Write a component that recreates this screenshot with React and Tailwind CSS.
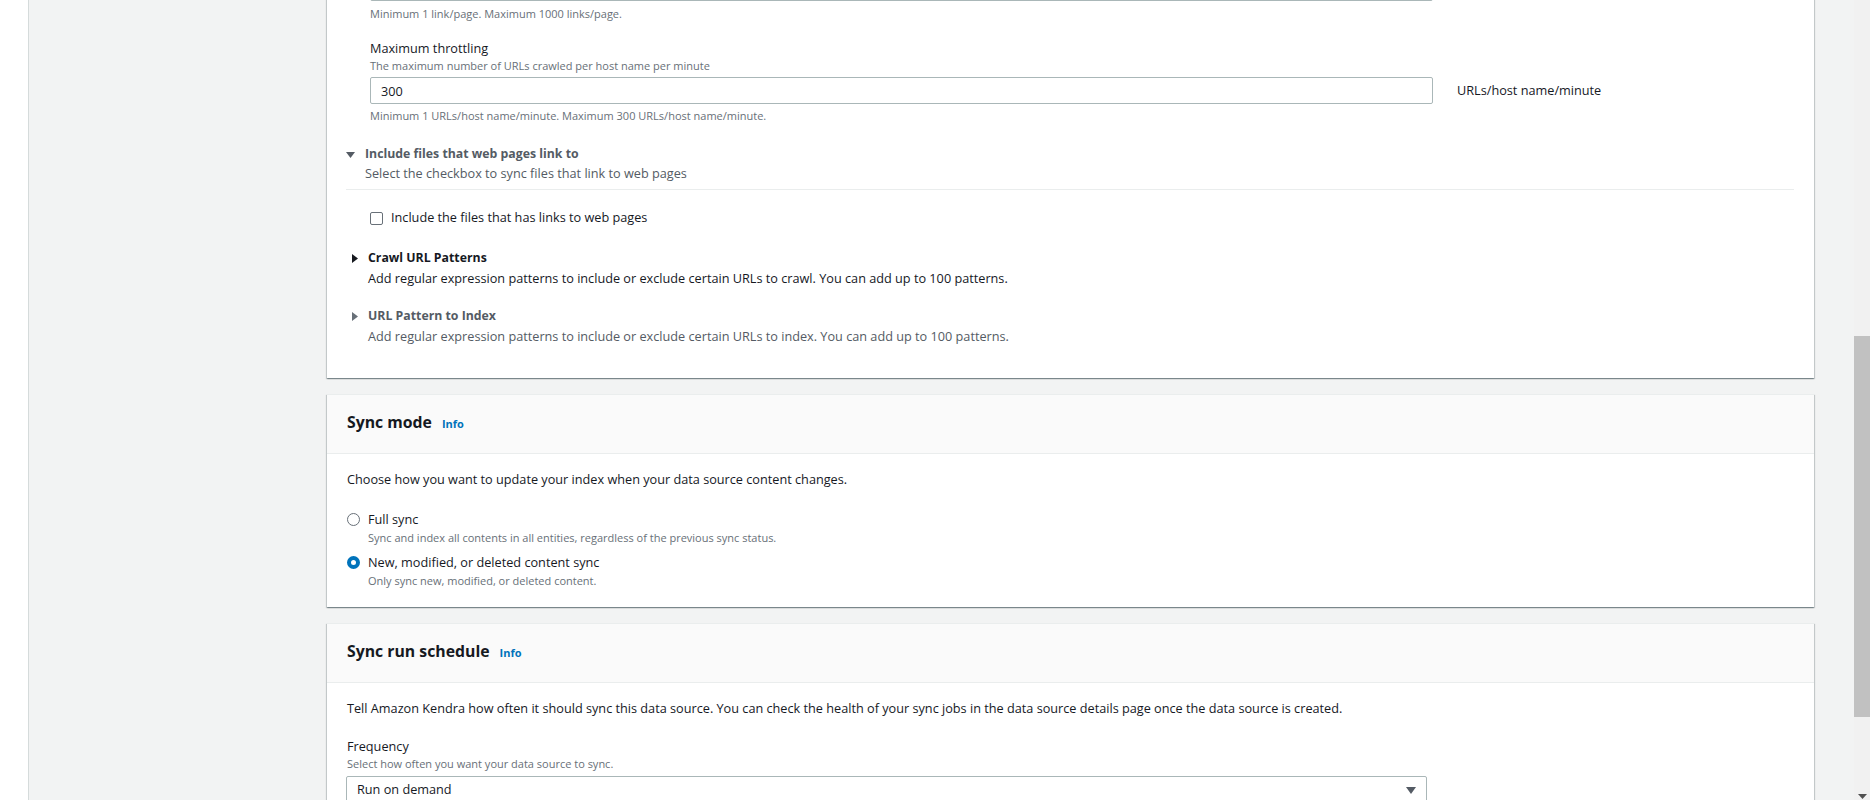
import { useState } from 'react';

const cardShadow =
  'shadow-[0_1px_1px_0_rgba(0,28,36,0.3),1px_1px_1px_0_rgba(0,28,36,0.15),-1px_1px_1px_0_rgba(0,28,36,0.15)]';

function Caret({ open, color }) {
  if (open) {
    return (
      <svg width="9" height="6" viewBox="0 0 9 6" className="shrink-0">
        <polygon points="0,0 9,0 4.5,6" fill={color} />
      </svg>
    );
  }
  return (
    <svg width="6" height="9" viewBox="0 0 6 9" className="shrink-0">
      <polygon points="0,0 6,4.5 0,9" fill={color} />
    </svg>
  );
}

function CardHeader({ title }) {
  return (
    <div className="flex items-baseline gap-[10px] bg-[#fafafa] border-b border-[#eaeded] pl-[20px] pt-[15px] pb-[19px]">
      <h2 className="text-[15.8px] leading-[24px] font-bold text-[#16191f]">{title}</h2>
      <a className="text-[11px] font-bold text-[#0073bb]">Info</a>
    </div>
  );
}

function Radio({ checked }) {
  if (checked) {
    return <span className="block w-[13px] h-[13px] rounded-full border-[4px] border-[#0073bb] bg-white shrink-0" />;
  }
  return <span className="block w-[13px] h-[13px] rounded-full border border-[#687078] bg-white shrink-0" />;
}

function ScrollBar() {
  return (
    <div className="w-[16px] shrink-0 bg-[#f1f1f1] flex flex-col">
      <div className="mt-[336px] h-[381px] bg-[#c1c1c1]" />
      <div className="flex-1" />
      <div className="h-[6px] flex justify-center">
        <svg width="9" height="6" viewBox="0 0 9 6">
          <polygon points="0,0 9,0 4.5,5" fill="#505050" />
        </svg>
      </div>
    </div>
  );
}

export default function App() {
  const [mode, setMode] = useState('delta');

  return (
    <div className="flex h-[800px] w-[1870px] overflow-hidden bg-[#f2f3f3] font-['Open_Sans','Noto_Sans',sans-serif] text-[#16191f]">
      <div className="w-[29px] shrink-0 bg-white border-r border-[#d5dbdb]" />

      <main className="flex-1 overflow-hidden pl-[298px] pr-[40px]">
        <div className="flex flex-col gap-[16px] mt-[-40px]">
          {/* Web crawler settings (tail) */}
          <section className={`bg-white border-t border-[#eaeded] ${cardShadow}`}>
            <div className="pl-[19px] pr-[20px] pt-[12px] pb-[32px]">
              <div className="ml-[24px]">
                <div className="w-[1063px] h-[28px] border border-[#aab7b8] rounded-[2px]" />
                <p className="mt-[5px] text-[11px] leading-[16px] text-[#687078]">
                  Minimum 1 link/page. Maximum 1000 links/page.
                </p>

                <label className="block mt-4 text-[12.7px] leading-[20px]">Maximum throttling</label>
                <p className="text-[11px] leading-[16px] text-[#687078]">
                  The maximum number of URLs crawled per host name per minute
                </p>
                <div className="mt-[3px] flex items-center gap-[24px]">
                  <input
                    defaultValue="300"
                    className="w-[1063px] h-[27px] border border-[#aab7b8] rounded-[2px] px-[10px] text-[12.7px] outline-none"
                  />
                  <span className="text-[12.7px]">URLs/host name/minute</span>
                </div>
                <p className="mt-1 text-[11px] leading-[16px] text-[#687078]">
                  Minimum 1 URLs/host name/minute. Maximum 300 URLs/host name/minute.
                </p>
              </div>

              {/* Include files */}
              <div className="mt-[21px] flex items-center gap-[10px] h-[19px]">
                <Caret open color="#545b64" />
                <span className="text-[12.3px] font-bold text-[#545b64]">Include files that web pages link to</span>
              </div>
              <p className="pl-[19px] text-[12.7px] leading-[19px] text-[#545b64]">
                Select the checkbox to sync files that link to web pages
              </p>
              <div className="mt-[6px] border-t border-[#eaeded]" />

              <label className="mt-[18px] ml-[24px] flex items-center gap-[8px] h-[20px] text-[12.7px]">
                <span className="block w-[13px] h-[13px] border border-[#687078] rounded-[2px] bg-white" />
                Include the files that has links to web pages
              </label>

              {/* Crawl URL Patterns */}
              <div className="mt-[21px] flex items-center gap-[10px] pl-[6px] h-[19px]">
                <Caret color="#16191f" />
                <span className="text-[12.3px] font-bold">Crawl URL Patterns</span>
              </div>
              <p className="pl-[22px] text-[12.7px] leading-[20px]">
                Add regular expression patterns to include or exclude certain URLs to crawl. You can add up to 100 patterns.
              </p>

              {/* URL Pattern to Index */}
              <div className="mt-[19px] flex items-center gap-[10px] pl-[6px] h-[19px]">
                <Caret color="#687078" />
                <span className="text-[12.3px] font-bold text-[#545b64]">URL Pattern to Index</span>
              </div>
              <p className="pl-[22px] text-[12.7px] leading-[20px] text-[#545b64]">
                Add regular expression patterns to include or exclude certain URLs to index. You can add up to 100 patterns.
              </p>
            </div>
          </section>

          {/* Sync mode */}
          <section className={`bg-white border-t border-[#eaeded] ${cardShadow}`}>
            <CardHeader title="Sync mode" />
            <div className="pl-[20px] pr-[20px] pt-[15px] pb-[18px]">
              <p className="text-[12.7px] leading-[20px]">
                Choose how you want to update your index when your data source content changes.
              </p>
              <div className="mt-[20px] flex flex-col gap-[6px]">
                <div className="flex gap-[8px] cursor-pointer" onClick={() => setMode('full')}>
                  <div className="h-[20px] flex items-center">
                    <Radio checked={mode === 'full'} />
                  </div>
                  <div>
                    <div className="text-[12.7px] leading-[20px]">Full sync</div>
                    <div className="text-[11px] leading-[17px] text-[#687078]">
                      Sync and index all contents in all entities, regardless of the previous sync status.
                    </div>
                  </div>
                </div>
                <div className="flex gap-[8px] cursor-pointer" onClick={() => setMode('delta')}>
                  <div className="h-[20px] flex items-center">
                    <Radio checked={mode === 'delta'} />
                  </div>
                  <div>
                    <div className="text-[12.7px] leading-[20px]">New, modified, or deleted content sync</div>
                    <div className="text-[11px] leading-[17px] text-[#687078]">
                      Only sync new, modified, or deleted content.
                    </div>
                  </div>
                </div>
              </div>
            </div>
          </section>

          {/* Sync run schedule */}
          <section className={`bg-white border-t border-[#eaeded] ${cardShadow}`}>
            <CardHeader title="Sync run schedule" />
            <div className="pl-[19px] pr-[20px] pt-[15px] pb-[20px]">
              <p className="pl-[1px] text-[12.7px] leading-[20px]">
                Tell Amazon Kendra how often it should sync this data source. You can check the health of your sync jobs in the data source details page once the data source is created.
              </p>
              <label className="block mt-[18px] pl-[1px] text-[12.7px] leading-[20px]">Frequency</label>
              <p className="pl-[1px] text-[11px] leading-[16px] text-[#687078]">
                Select how often you want your data source to sync.
              </p>
              <div className="mt-[4px] w-[1081px] h-[28px] flex items-center justify-between border border-[#aab7b8] rounded-[2px] pl-[10px] pr-[10px] bg-white">
                <span className="text-[12.7px]">Run on demand</span>
                <svg width="10" height="7" viewBox="0 0 10 7">
                  <polygon points="0,0 10,0 5,7" fill="#545b64" />
                </svg>
              </div>
            </div>
          </section>
        </div>
      </main>

      <ScrollBar />
    </div>
  );
}
